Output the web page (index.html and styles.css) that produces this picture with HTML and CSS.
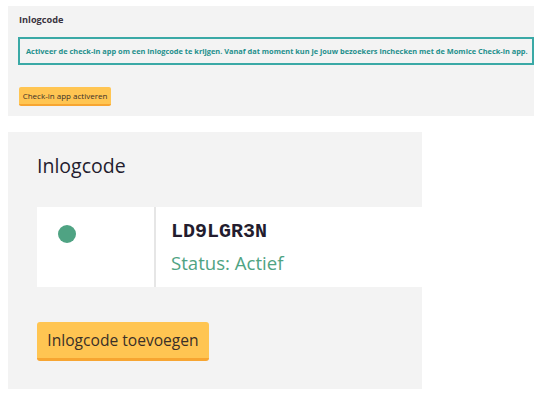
FILE: index.html
```html
<!DOCTYPE html>
<html>
<head>
<meta charset="utf-8">
<link rel="stylesheet" href="styles.css">
</head>
<body>
<section class="mini">
  <h2 class="mini-title">Inlogcode</h2>
  <div class="mini-info">Activeer de check-in app om een inlogcode te krijgen. Vanaf dat moment kun je jouw bezoekers inchecken met de Momice Check-in app.</div>
  <button class="mini-btn">Check-in app activeren</button>
</section>
<section class="panel">
  <h2 class="panel-title">Inlogcode</h2>
  <div class="code-row">
    <div class="code-status"><span class="dot"></span></div>
    <div class="code-info">
      <div class="code">LD9LGR3N</div>
      <div class="status">Status: Actief</div>
    </div>
  </div>
  <button class="btn">Inlogcode toevoegen</button>
</section>
</body>
</html>
```
FILE: styles.css
```css
html, body {
  background: #ffffff;
}
body {
  margin: 6px 10px 0 8px;
  font-family: "Open Sans", "Noto Sans", sans-serif;
  color: #2a2433;
}
.mini {
  background: #f3f3f3;
  height: 110px;
  box-sizing: border-box;
  padding: 8px 0 0 11px;
  display: flex;
  flex-direction: column;
  align-items: flex-start;
}
.mini-title {
  margin: 0;
  font-size: 9.2px;
  font-weight: 700;
  color: #3a3440;
  line-height: 12px;
}
.mini-info {
  margin: 11px 0 0 -1px;
  align-self: stretch;
  border: 2px solid #3aa9a6;
  padding: 7px 6px;
  font-size: 7.4px;
  font-weight: 700;
  color: #1e8f8c;
  line-height: 10px;
  white-space: nowrap;
}
.mini-btn {
  margin-top: 22px;
  background: #ffc552;
  border: none;
  border-bottom: 2px solid #f7a531;
  border-radius: 2px;
  font-family: inherit;
  font-size: 8px;
  color: #3a3028;
  height: 19px;
  width: 92px;
  padding: 0;
}
.panel {
  margin-top: 16px;
  width: 414px;
  height: 257px;
  box-sizing: border-box;
  background: #f3f3f3;
  padding: 20px 0 0 29px;
}
.panel-title {
  margin: 0;
  font-size: 19.5px;
  font-weight: 400;
  line-height: 28px;
  color: #231c2e;
}
.code-row {
  margin-top: 27px;
  display: flex;
  height: 80px;
  background: #ffffff;
}
.code-status {
  width: 117px;
  border-right: 2px solid #e6e6e6;
  box-sizing: content-box;
}
.dot {
  display: block;
  width: 18px;
  height: 18px;
  border-radius: 50%;
  background: #4fa383;
  margin: 18px 0 0 21px;
}
.code-info {
  padding: 14px 0 0 15px;
}
.code {
  font-family: "Courier New", "Liberation Mono", monospace;
  font-weight: 700;
  font-size: 20px;
  line-height: 22px;
  color: #231c2e;
}
.status {
  margin-top: 8px;
  font-size: 18.6px;
  line-height: 24px;
  color: #4fa383;
}
.btn {
  display: block;
  margin-top: 35px;
  background: #ffc552;
  border: none;
  border-bottom: 3px solid #f7a531;
  border-radius: 3px;
  font-family: inherit;
  font-size: 15.6px;
  color: #3a3028;
  height: 39px;
  width: 172px;
  padding: 0;
}
```
